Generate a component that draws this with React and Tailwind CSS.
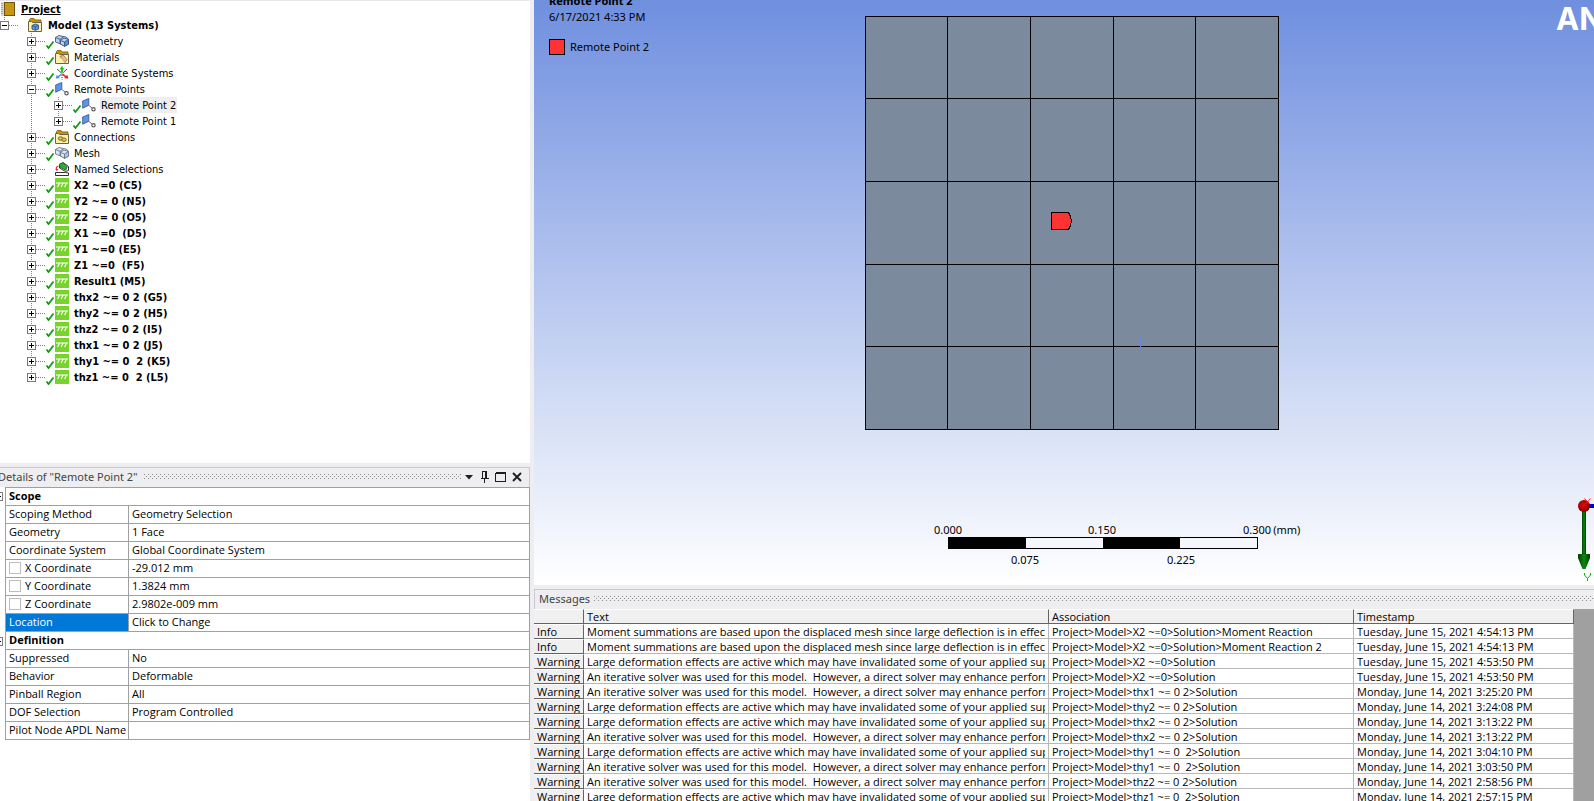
import React, { useState } from 'react';

const TREE_FONT = "font-['DejaVu_Sans_Condensed','DejaVu_Sans',sans-serif]";
const UI_FONT = "font-['Open_Sans',sans-serif]";
const TITLE_FONT = "font-['Noto_Sans',sans-serif]";

const treeItems = [
  { label: 'Geometry', icon: 'geometry', check: true },
  { label: 'Materials', icon: 'materials', check: true },
  { label: 'Coordinate Systems', icon: 'axes', check: true },
  {
    label: 'Remote Points',
    icon: 'remote',
    check: true,
    children: [
      { label: 'Remote Point 2', icon: 'remote', check: true },
      { label: 'Remote Point 1', icon: 'remote', check: true },
    ],
  },
  { label: 'Connections', icon: 'connections', check: true },
  { label: 'Mesh', icon: 'mesh', check: true },
  { label: 'Named Selections', icon: 'named', check: false },
  ...[
    'X2 ~=0 (C5)',
    'Y2 ~= 0 (N5)',
    'Z2 ~= 0 (O5)',
    'X1 ~=0  (D5)',
    'Y1 ~=0 (E5)',
    'Z1 ~=0  (F5)',
    'Result1 (M5)',
    'thx2 ~= 0 2 (G5)',
    'thy2 ~= 0 2 (H5)',
    'thz2 ~= 0 2 (I5)',
    'thx1 ~= 0 2 (J5)',
    'thy1 ~= 0  2 (K5)',
    'thz1 ~= 0  2 (L5)',
  ].map((label) => ({ label, icon: 'analysis', check: true, bold: true })),
];

const details = [
  { section: 'Scope' },
  { name: 'Scoping Method', value: 'Geometry Selection' },
  { name: 'Geometry', value: '1 Face' },
  { name: 'Coordinate System', value: 'Global Coordinate System' },
  { name: 'X Coordinate', value: '-29.012 mm', tick: true },
  { name: 'Y Coordinate', value: '1.3824 mm', tick: true },
  { name: 'Z Coordinate', value: '2.9802e-009 mm', tick: true },
  { name: 'Location', value: 'Click to Change', selected: true },
  { section: 'Definition' },
  { name: 'Suppressed', value: 'No' },
  { name: 'Behavior', value: 'Deformable' },
  { name: 'Pinball Region', value: 'All' },
  { name: 'DOF Selection', value: 'Program Controlled' },
  { name: 'Pilot Node APDL Name', value: '' },
];

const MOMENT =
  'Moment summations are based upon the displaced mesh since large deflection is in effect.';
const LARGE =
  'Large deformation effects are active which may have invalidated some of your applied supports.';
const ITER =
  'An iterative solver was used for this model.  However, a direct solver may enhance performance.';

const messages = [
  ['Info', MOMENT, 'Project>Model>X2 ~=0>Solution>Moment Reaction', 'Tuesday, June 15, 2021 4:54:13 PM'],
  ['Info', MOMENT, 'Project>Model>X2 ~=0>Solution>Moment Reaction 2', 'Tuesday, June 15, 2021 4:54:13 PM'],
  ['Warning', LARGE, 'Project>Model>X2 ~=0>Solution', 'Tuesday, June 15, 2021 4:53:50 PM'],
  ['Warning', ITER, 'Project>Model>X2 ~=0>Solution', 'Tuesday, June 15, 2021 4:53:50 PM'],
  ['Warning', ITER, 'Project>Model>thx1 ~= 0 2>Solution', 'Monday, June 14, 2021 3:25:20 PM'],
  ['Warning', LARGE, 'Project>Model>thy2 ~= 0 2>Solution', 'Monday, June 14, 2021 3:24:08 PM'],
  ['Warning', LARGE, 'Project>Model>thx2 ~= 0 2>Solution', 'Monday, June 14, 2021 3:13:22 PM'],
  ['Warning', ITER, 'Project>Model>thx2 ~= 0 2>Solution', 'Monday, June 14, 2021 3:13:22 PM'],
  ['Warning', LARGE, 'Project>Model>thy1 ~= 0  2>Solution', 'Monday, June 14, 2021 3:04:10 PM'],
  ['Warning', ITER, 'Project>Model>thy1 ~= 0  2>Solution', 'Monday, June 14, 2021 3:03:50 PM'],
  ['Warning', ITER, 'Project>Model>thz2 ~= 0 2>Solution', 'Monday, June 14, 2021 2:58:56 PM'],
  ['Warning', LARGE, 'Project>Model>thz1 ~= 0  2>Solution', 'Monday, June 14, 2021 2:57:15 PM'],
];

function Folder({ children }) {
  return (
    <>
      <path d="M1.5 4V1.5L2.5 .5H6l1 1.5h6V5z" fill="#c8930f" stroke="#8a6a1c" />
      <path d="M.5 3.5h3l1.5 1h8.5v9H.5z" fill="#fbf1a8" stroke="#6d6440" />
      {children}
    </>
  );
}

function Blocks({ a, b, line }) {
  return (
    <g stroke={line} strokeWidth=".9" strokeLinejoin="round">
      <path d="M.5 3.5 4 1.5l4 1 3 .5 2.5 2v5l-3.5 2-4.5-2L.5 8z" fill={a} />
      <path d="M5.5 6.5 9.5 8v4.3L5.5 10z" fill={a} />
      <path d="M9.5 8 13.5 5.5v4.8L9.5 12.3z" fill={b} />
      <path d="M.5 3.5 5 5.3 8.5 2.8M5 5.3V10M5.5 6.3 9 4l4.5 1.5" fill="none" />
    </g>
  );
}

function TreeIcon({ name }) {
  const art = {
    geometry: <Blocks a="#b9d3f2" b="#4c8ff0" line="#41587c" />,
    mesh: <Blocks a="#dde6f3" b="#a9c6ee" line="#66758a" />,
    materials: (
      <Folder>
        <path d="M5 6.5 8 5l4 4.5-2 3z" fill="#e3b184" stroke="#8b6f55" strokeWidth=".8" />
        <path d="m6.5 8 3 3.5M8 6.5l3 3.5" stroke="#f7dcc0" strokeWidth=".7" />
      </Folder>
    ),
    connections: (
      <Folder>
        <ellipse cx="5.5" cy="8.5" rx="2.2" ry="1.7" fill="#e5c46b" stroke="#7d6320" />
        <ellipse cx="9" cy="9.7" rx="2.2" ry="1.7" fill="#e5c46b" stroke="#7d6320" />
      </Folder>
    ),
    model: (
      <Folder>
        <path d="M4 7.5 7.5 6l3 1.3v3.7l-3 1.3L4 11z" fill="#5f9af2" stroke="#2c4f86" strokeWidth=".9" />
        <path d="M4 7.5 7.3 8.8l3.2-1.5M7.3 8.8v3.5" fill="none" stroke="#2c4f86" strokeWidth=".8" />
      </Folder>
    ),
    axes: (
      <>
        <path d="M7 6V2.5M2 3l4 3.5M12 3 8.3 6.5" stroke="#3c3c3c" strokeWidth=".9" />
        <path d="M7 7.5V3" stroke="#12c512" strokeWidth="1.6" />
        <path d="M7 0 9.4 3.5H4.6z" fill="#12c512" />
        <path d="m6.5 8-3.5 3" stroke="#4c93f0" strokeWidth="1.6" />
        <path d="M.5 12.5 1.8 8.8 4.9 12.2z" fill="#4c93f0" />
        <path d="m7.5 8 3.5 3" stroke="#e51b1b" strokeWidth="1.6" />
        <path d="M13.5 12.5 12.2 8.8 9.1 12.2z" fill="#e51b1b" />
        <path d="M7 9v4.5" stroke="#3c3c3c" strokeDasharray="1 1" />
      </>
    ),
    remote: (
      <>
        <path d="M.7 3 6.8.5v6.8L.7 10.2z" fill="#5b94e8" stroke="#3c5f96" strokeWidth=".9" />
        <path d="M6.8 7.5 10 10" stroke="#666" strokeWidth=".9" />
        <circle cx="11.5" cy="11.3" r="1.7" fill="#fff" stroke="#555" strokeWidth="1.1" />
      </>
    ),
    named: (
      <>
        <path d="M4.5 3 8 .5l5.5 4v4L10.5 9.500 4.5 6z" fill="#fff" stroke="#333" />
        <path d="M4.7 1.8 8 .9l4.300 3.800-1.500 3.500L4.7 5z" fill="#1fb82c" stroke="#333" strokeWidth=".7" />
        <path d="M3.5 4C1.5 4.5 1 6 1.500 7.500" fill="none" stroke="#e02a2a" strokeWidth="1.2" />
        <path d="M.2 7h3.200L2 9.200z" fill="#e02a2a" />
        <path d="M.5 10.5h10l3 .5v2.5H.5z" fill="#fff" stroke="#333" />
      </>
    ),
    analysis: (
      <>
        <rect width="14" height="14" fill="#78d42c" />
        <path d="M1 5h12M4.5 5 2.700 9M8 5 6.200 9M11.500 5 9.700 9" stroke="#fff" strokeWidth="1.1" fill="none" />
      </>
    ),
    project: (
      <>
        <rect x="3.5" y=".5" width="10" height="13" fill="#c9960f" stroke="#6b5212" />
        <rect x="0" y="0" width="3" height="14" fill="#d9d9d9" />
        <path d="M1 1v12" stroke="#777" strokeDasharray="1 1" />
      </>
    ),
  };
  return (
    <svg className="h-3.5 w-3.5 shrink-0" viewBox="0 0 14 14" fill="none" aria-hidden="true">
      {art[name]}
    </svg>
  );
}

function Gutter({ open, check, last, onToggle, label }) {
  return (
    <button
      type="button"
      onClick={onToggle}
      aria-label={`${open ? 'Collapse' : 'Expand'} ${label}`}
      className="h-4 shrink-0"
    >
      <svg className="h-4 w-7" viewBox="0 0 28 16" shapeRendering="crispEdges" fill="none">
        <path d={last ? 'M4.5 0V4' : 'M4.5 0V16'} stroke="#808080" strokeDasharray="1 1" />
        <path d="M9 8.5H19" stroke="#808080" strokeDasharray="1 1" />
        <rect x=".5" y="4.5" width="8" height="8" fill="#fff" stroke="#7a7a7a" />
        <path d="M2 8.5H7" stroke="#000" />
        {!open && <path d="M4.5 6V11" stroke="#000" />}
        {check && (
          <path d="M19.5 12.5 21.5 15 26.5 8.5" stroke="#129a12" strokeWidth="1.8" shapeRendering="auto" />
        )}
      </svg>
    </button>
  );
}

function TreeRow({ item, nested, last, open, selected, onToggle, onSelect }) {
  return (
    <li className="flex h-4 items-center">
      <span className="h-4 w-[27px] shrink-0" />
      {nested && (
        <svg className="h-4 w-[27px] shrink-0" viewBox="0 0 27 16" shapeRendering="crispEdges" aria-hidden="true">
          <path d="M4.5 0V16" stroke="#808080" strokeDasharray="1 1" />
        </svg>
      )}
      <Gutter open={open} check={item.check} last={last} onToggle={onToggle} label={item.label} />
      <TreeIcon name={item.icon} />
      <button
        type="button"
        onClick={onSelect}
        className={`ml-1 h-4 px-px pt-px whitespace-pre leading-4 ${item.bold ? 'font-bold' : ''} ${selected ? 'bg-[#eeeeee]' : ''}`}
      >
        {item.label}
      </button>
    </li>
  );
}

function Outline({ selected, setSelected }) {
  const [rootOpen, setRootOpen] = useState(true);
  const [open, setOpen] = useState({ 'Remote Points': true });
  return (
    <nav
      aria-label="Outline"
      className={`min-h-0 flex-1 overflow-hidden border-t border-[#e6e6ea] bg-white text-[11px] text-black ${TREE_FONT}`}
    >
      <div className="flex h-4 items-center pl-px">
        <TreeIcon name="project" />
        <span className="ml-1.5 h-4 pt-px font-bold leading-4 underline">Project</span>
      </div>
      <div className="flex h-4 items-center">
        <Gutter open={rootOpen} last label="Model" onToggle={() => setRootOpen(!rootOpen)} />
        <TreeIcon name="model" />
        <span className="ml-1.5 h-4 pt-px font-bold leading-4">Model (13 Systems)</span>
      </div>
      {rootOpen && (
        <ul>
          {treeItems.map((item, i) => (
            <React.Fragment key={item.label}>
              <TreeRow
                item={item}
                last={i === treeItems.length - 1}
                open={!!open[item.label]}
                selected={selected === item.label}
                onToggle={() => setOpen({ ...open, [item.label]: !open[item.label] })}
                onSelect={() => setSelected(item.label)}
              />
              {open[item.label] &&
                item.children?.map((child, j) => (
                  <TreeRow
                    key={child.label}
                    item={child}
                    nested
                    last={j === item.children.length - 1}
                    selected={selected === child.label}
                    onSelect={() => setSelected(child.label)}
                  />
                ))}
            </React.Fragment>
          ))}
        </ul>
      )}
    </nav>
  );
}

function Grip({ id }) {
  return (
    <svg className="h-[5px] min-w-0 flex-1" shapeRendering="crispEdges" aria-hidden="true">
      <defs>
        <pattern id={id} width="4" height="4" patternUnits="userSpaceOnUse">
          <rect width="1" height="1" fill="#8e8e92" />
          <rect x="2" y="2" width="1" height="1" fill="#8e8e92" />
        </pattern>
      </defs>
      <rect width="100%" height="5" fill={`url(#${id})`} />
    </svg>
  );
}

function HeaderButton({ label, children }) {
  return (
    <button type="button" aria-label={label} className="flex h-4 w-4 shrink-0 items-center justify-center">
      <svg className="h-3 w-3" viewBox="0 0 12 12" fill="none" stroke="#1e1e1e">
        {children}
      </svg>
    </button>
  );
}

function Details() {
  return (
    <section className={`h-[338px] shrink-0 overflow-hidden bg-white text-[11px] text-black ${UI_FONT}`}>
      <header className="border-t-4 border-[#eeeef0]">
        <div className="flex h-5 items-center border-t border-r border-[#c9c9dc] bg-[#eeeef0] pb-0.5 pr-1">
          <h2 className={`-ml-0.5 mr-1.5 leading-4 whitespace-nowrap text-[#444444] ${TITLE_FONT}`}>
            Details of "Remote Point 2"
          </h2>
          <Grip id="grip-details" />
          <HeaderButton label="Options">
            <path d="M2 4h8L6 8.5z" fill="#1e1e1e" stroke="none" />
          </HeaderButton>
          <HeaderButton label="Pin">
            <path d="M3.5 7.5v-7h4v7M6.5 .5v7M1.5 7.5h8M5.5 8v4" shapeRendering="crispEdges" />
          </HeaderButton>
          <HeaderButton label="Maximize">
            <path d="M.5 2.5h10v8H.5zM.5 1.5h10" shapeRendering="crispEdges" />
          </HeaderButton>
          <HeaderButton label="Close">
            <path d="m2 2 8 8M10 2l-8 8" strokeWidth="1.9" />
          </HeaderButton>
        </div>
      </header>
      <table className="w-full table-fixed border-separate border-spacing-0">
        <colgroup>
          <col className="w-[5px]" />
          <col className="w-[123px]" />
          <col />
        </colgroup>
        <tbody>
          {details.map((row, i) =>
            row.section ? (
              <tr key={row.section} className={i === 0 ? 'h-[19px]' : 'h-[18px]'}>
                <td className="overflow-hidden p-0">
                  <button type="button" aria-label={`Collapse ${row.section}`} className="block h-[9px] w-[3px]">
                    <svg className="h-[9px] w-[3px]" viewBox="0 0 3 9" shapeRendering="crispEdges" fill="none">
                      <path d="M0 .5h2.5v8H0" stroke="#7a7a7a" />
                      <path d="M0 4.5h1" stroke="#000" />
                    </svg>
                  </button>
                </td>
                <th
                  colSpan={2}
                  scope="colgroup"
                  className={`border-b border-l border-r border-[#a0a0a0] p-0 pl-[3px] text-left align-top font-bold leading-4 ${i === 0 ? 'border-t' : ''}`}
                >
                  {row.section}
                </th>
              </tr>
            ) : (
              <tr key={row.name} className="h-[18px]">
                <td className="p-0" />
                <th
                  scope="row"
                  className={`border-b border-l border-[#a0a0a0] p-0 pl-[3px] text-left align-top font-normal leading-4 whitespace-nowrap ${
                    row.selected ? 'bg-[#0078d7] text-white' : ''
                  }`}
                >
                  {row.tick ? (
                    <label className="flex h-4 items-center gap-1">
                      <input
                        type="checkbox"
                        className="h-3 w-3 appearance-none border border-[#bdbdbd] bg-white checked:bg-[#0078d7]"
                      />
                      {row.name}
                    </label>
                  ) : (
                    row.name
                  )}
                </th>
                <td className="border-b border-l border-r border-[#a0a0a0] p-0 pl-[3px] align-top leading-4">
                  {row.value}
                </td>
              </tr>
            )
          )}
        </tbody>
      </table>
    </section>
  );
}

function MeshFace() {
  const lines = [82, 165, 248, 330];
  return (
    <svg
      className="absolute left-[331px] top-4 h-[414px] w-[414px]"
      viewBox="0 0 414 414"
      shapeRendering="crispEdges"
      fill="none"
      role="img"
      aria-label="Meshed face"
    >
      <rect x=".5" y=".5" width="413" height="413" fill="#7b8a9c" stroke="#000" />
      {lines.map((n) => (
        <path key={n} d={`M${n}.5 0V414M0 ${n}.5H414`} stroke="#000" />
      ))}
      <path d="M186.5 196.5h17l2 4 1 4.5-1 4.5-2 4h-17z" fill="#ff3333" stroke="#000" />
      <path d="M270 327.5h11M275.5 322v12" stroke="#6a85e0" />
    </svg>
  );
}

function ScaleRuler() {
  return (
    <div className="absolute bottom-[17px] left-[400px] w-[372px] leading-4">
      <div className="flex h-[15px]">
        <span className="w-[154px]">0.000</span>
        <span className="w-[155px]">0.150</span>
        <span className="whitespace-nowrap">0.300</span>
        <span className="ml-0.5 whitespace-nowrap">(mm)</span>
      </div>
      <div className="ml-3.5 flex h-3 w-[310px] border border-black bg-[#f6f7fd]">
        <span className="w-1/4 bg-black" />
        <span className="w-1/4" />
        <span className="w-1/4 bg-black" />
      </div>
      <div className="mt-[3px] flex h-4 pl-[77px]">
        <span className="w-[156px]">0.075</span>
        <span>0.225</span>
      </div>
    </div>
  );
}

function Triad() {
  return (
    <svg className="absolute bottom-0 right-0 h-[88px] w-4" viewBox="0 0 16 88" fill="none" role="img" aria-label="Axis triad">
      <defs>
        <radialGradient id="triad-ball" cx=".45" cy=".45" r=".6">
          <stop offset="0" stopColor="#e80808" />
          <stop offset="1" stopColor="#7a0000" />
        </radialGradient>
        <linearGradient id="triad-arm">
          <stop offset="0" stopColor="#003c00" />
          <stop offset=".5" stopColor="#0a8a0a" />
          <stop offset="1" stopColor="#003c00" />
        </linearGradient>
      </defs>
      <rect x="10" y="7" width="6" height="4" fill="#0000c0" />
      <rect x="4" y="12" width="4" height="46" fill="url(#triad-arm)" />
      <path d="M0 57h12v4L7.5 72h-3L0 61z" fill="url(#triad-arm)" />
      <circle cx="6" cy="9" r="6" fill="url(#triad-ball)" />
      <path d="m6.5 1.5 3 3.5 3-3.5M9.5 5l-2 2M9.500 5l2 2" stroke="#ff1a1a" />
      <path d="M6.5 76v2l3 3.5 3-3.5v-2M9.5 81.500V84" stroke="#12b012" />
    </svg>
  );
}

function Viewport() {
  return (
    <main
      className={`relative min-h-0 flex-1 overflow-hidden bg-linear-to-b/srgb from-[#6f8fdf] to-white text-[11px] text-black ${TITLE_FONT}`}
    >
      <div className="absolute -top-[7px] left-[15px] leading-4">
        <h1 className="font-bold">Remote Point 2</h1>
        <p>6/17/2021 4:33 PM</p>
        <div className="mt-3.5 flex items-center gap-[5px]">
          <span className="h-4 w-4 border border-black bg-[#ff3333]" />
          Remote Point 2
        </div>
      </div>
      <MeshFace />
      <span className="absolute left-[1022px] top-0 font-['Inter',sans-serif] text-[31px] font-bold leading-[38px] text-white">
        ANSYS
      </span>
      <ScaleRuler />
      <Triad />
    </main>
  );
}

function Messages() {
  const head =
    'border-b border-r border-t border-b-[#646464] border-r-[#646464] border-t-white bg-[#f0f0f0] p-0 px-[3px] text-left font-normal';
  return (
    <section className={`flex h-[216px] shrink-0 flex-col overflow-hidden bg-[#eeeef0] pt-1 text-[11px] text-black ${UI_FONT}`}>
      <header className="flex h-5 shrink-0 items-center border-l border-t border-[#c9c9dc] pb-0.5 pl-1">
        <h2 className={`mr-1 leading-4 text-[#444444] ${TITLE_FONT}`}>Messages</h2>
        <Grip id="grip-messages" />
      </header>
      <div className="min-h-0 flex-1 overflow-hidden bg-[#a0a0a0]">
        <table className="w-[1040px] table-fixed border-separate border-spacing-0">
          <colgroup>
            <col className="w-[50px]" />
            <col className="w-[465px]" />
            <col className="w-[305px]" />
            <col className="w-[220px]" />
          </colgroup>
          <thead>
            <tr>
              {['', 'Text', 'Association', 'Timestamp'].map((t) => (
                <th key={t} scope="col" className={head}>
                  <div className="h-[13px] leading-[13px]">{t}</div>
                </th>
              ))}
            </tr>
          </thead>
          <tbody>
            {messages.map((row, i) => (
              <tr key={i}>
                <th scope="row" className={head}>
                  <div className="h-[13px] overflow-hidden leading-[13px]">{row[0]}</div>
                </th>
                {row.slice(1).map((t, j) => (
                  <td key={j} className="border-b border-r border-[#b8b8b8] bg-white p-0 px-[3px]">
                    <div className="h-3.5 overflow-hidden whitespace-pre leading-[15px]">{t}</div>
                  </td>
                ))}
              </tr>
            ))}
          </tbody>
        </table>
      </div>
    </section>
  );
}

export default function App() {
  const [selected, setSelected] = useState('Remote Point 2');
  return (
    <div className="flex h-screen overflow-hidden bg-[#eeeef0]">
      <aside className="flex w-[530px] shrink-0 flex-col">
        <Outline selected={selected} setSelected={setSelected} />
        <Details />
      </aside>
      <div className="ml-1 flex min-w-0 flex-1 flex-col">
        <Viewport />
        <Messages />
      </div>
    </div>
  );
}
